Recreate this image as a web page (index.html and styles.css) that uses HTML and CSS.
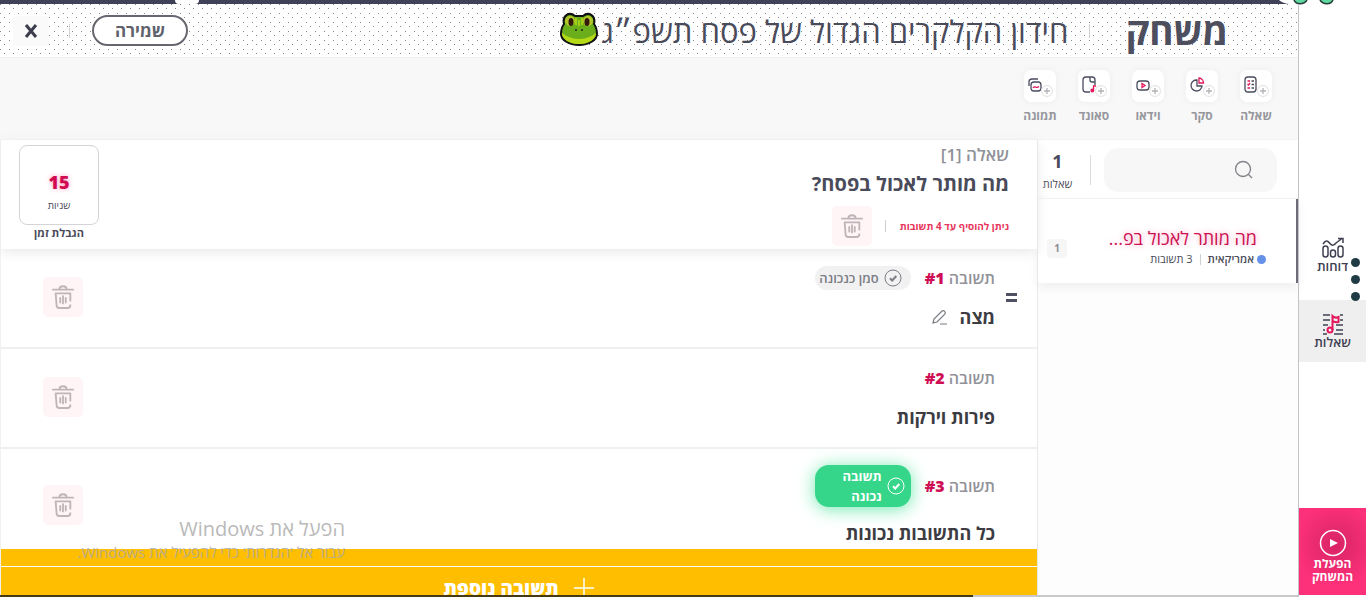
FILE: index.html
```html
<!DOCTYPE html>
<html lang="he" dir="rtl">
<head>
  <meta charset="UTF-8">
  <meta name="viewport" content="width=device-width, initial-scale=1.0">
  <title>משחק</title>
  <link rel="stylesheet" href="styles.css">
</head>
<body>
  <svg class="sprite" aria-hidden="true">
    <symbol id="trash" viewBox="0 0 24 28">
      <g fill="none" stroke="currentColor" stroke-width="2" stroke-linecap="round" stroke-linejoin="round">
        <path d="M1 6h22M8 6c0-5 8-5 8 0"/>
        <path d="M20 18v-8H4l1 13c0 2 1 3 3 3h9c2 0 3-1 3-3"/>
        <path d="M9 15v5M12 13v8M15 15v5"/>
      </g>
    </symbol>
    <symbol id="check" viewBox="0 0 18 18">
      <circle cx="9" cy="9" r="8" fill="none" stroke="currentColor"/>
      <path d="M6 9.300l2.200 2.200L12.300 7" fill="none" stroke="currentColor" stroke-width="2"/>
    </symbol>
  </svg>

  <nav class="sidebar">
    <a class="nav-item" href="#reports">
      <svg width="24" height="22" viewBox="0 0 24 22" fill="none" stroke="#3f4152" stroke-width="1.500">
        <rect x="2" y="9" width="5" height="11" rx="2.500"/>
        <rect x="9.500" y="13" width="5" height="7" rx="2.500"/>
        <rect x="17" y="9" width="5" height="11" rx="2.500"/>
        <path d="M2 7c3-5 5-3 7-.5s4 2 6-.5l6-4.500M17 1.500h5V6"/>
      </svg>
      <span>דוחות</span>
    </a>
    <a class="nav-item active" href="#questions">
      <svg width="22" height="22" viewBox="0 0 22 22" fill="none">
        <path d="M1 2h7M18 2h3M1 7h7M18 7h3M1 12h5M14 12h7M1 17h2M14 17h7M1 21h4M12 21h9" stroke="#3f4152" stroke-width="1.500"/>
        <circle cx="8" cy="17" r="2.500" stroke="#e4175c" stroke-width="2"/>
        <path d="M10.500 17V3c2 2 4 2 6 1v5c-2 1-4 0-6-1" stroke="#e4175c" stroke-width="2"/>
      </svg>
      <span>שאלות</span>
    </a>
    <button class="start" type="button">
      <svg width="28" height="28" viewBox="0 0 28 28">
        <circle cx="14" cy="14" r="12.500" fill="none" stroke="#fff" stroke-width="1.500"/>
        <path d="M11 10l8 4-8 4z" fill="#fff"/>
      </svg>
      <span>הפעלת המשחק</span>
    </button>
    <div class="dots"><i></i><i></i><i></i></div>
    <svg class="legs" width="60" height="5" viewBox="0 0 60 5">
      <path d="M0 0c4 4 10 4 20 5V0z" fill="#fff"/>
      <path d="M15 0c2 5 10 5 13 0M41 0c3 5 11 5 13 0" fill="#5fd8a0" stroke="#263b38" stroke-width="1.500"/>
    </svg>
  </nav>

  <main class="main">
    <header class="topbar">
      <h1>משחק</h1>
      <span class="divider"></span>
      <h2>חידון הקלקרים הגדול של פסח תשפ״ג</h2>
      <svg class="frog" width="38" height="34" viewBox="0 0 38 34">
        <path d="M4 12C2 4 9-1 15 4h8c6-5 13 0 11 8 3 4 3 8 3 10 0 6-8 11-18 11S1 28 1 22c0-2 0-6 3-10z" fill="#6bae1b" stroke="#111" stroke-width="2"/>
        <path d="M2 21c10 8 24 8 34 0 0 6-7 11-17 11S2 27 2 21z" fill="#b5d916"/>
        <circle cx="10" cy="9" r="5" fill="#b3c72a"/>
        <circle cx="28" cy="9" r="5" fill="#b3c72a"/>
        <ellipse cx="11" cy="10" rx="2.500" ry="4" fill="#33190c"/>
        <ellipse cx="27" cy="10" rx="2.500" ry="4" fill="#33190c"/>
        <path d="M16 6v7M19 8v6M22 6v7" stroke="#b5d916" stroke-width="1.500"/>
        <circle cx="16" cy="18" r="1" fill="#222"/>
        <circle cx="22" cy="18" r="1" fill="#222"/>
      </svg>
      <button class="save" type="button">שמירה</button>
      <span class="divider short"></span>
      <button class="close" type="button" aria-label="סגירה">
        <svg width="14" height="14" viewBox="0 0 14 14"><path d="M2 1l10 12M12 1L2 13" stroke="#3c3d4c" stroke-width="3"/></svg>
      </button>
    </header>

    <div class="toolbar">
      <button class="tool" type="button">
        <span class="tile">
          <svg width="28" height="24" viewBox="0 0 28 24" fill="none" stroke="#4a4c5e" stroke-width="1.300">
            <rect x="3" y="3" width="11" height="15" rx="3"/>
            <path d="M9.500 7H12M9.500 10.500H12M9.500 14H12"/>
            <path d="M5.500 7H8M5.500 10l1 1 1.500-2M5.500 14H8" stroke="#e4175c"/>
            <g class="plus"><circle cx="21" cy="17" r="5.500"/><path d="M21 14v6M18 17h6"/></g>
          </svg>
        </span>
        שאלה
      </button>
      <button class="tool" type="button">
        <span class="tile">
          <svg width="28" height="24" viewBox="0 0 28 24" fill="none" stroke="#4a4c5e" stroke-width="1.300">
            <path d="M9 6a5.500 5.500 0 1 0 5 6H9z"/>
            <path d="M11 9V4a5 5 0 0 1 4.500 5z" stroke="#e4175c"/>
            <g class="plus"><circle cx="21" cy="17" r="5.500"/><path d="M21 14v6M18 17h6"/></g>
          </svg>
        </span>
        סקר
      </button>
      <button class="tool" type="button">
        <span class="tile">
          <svg width="28" height="24" viewBox="0 0 28 24" fill="none" stroke="#4a4c5e" stroke-width="1.300">
            <rect x="3" y="7" width="12" height="9" rx="3"/>
            <path d="M8 9.500v4l3-2z" stroke="#e4175c"/>
            <g class="plus"><circle cx="21" cy="17" r="5.500"/><path d="M21 14v6M18 17h6"/></g>
          </svg>
        </span>
        וידאו
      </button>
      <button class="tool" type="button">
        <span class="tile">
          <svg width="28" height="24" viewBox="0 0 28 24" fill="none" stroke="#4a4c5e" stroke-width="1.300">
            <path d="M10 18H6a3 3 0 0 1-3-3V6a3 3 0 0 1 3-3h6a3 3 0 0 1 3 3v5M10 3v3c0 1 1 2 2 2h3"/>
            <g class="plus"><circle cx="21" cy="17" r="5.500"/><path d="M21 14v6M18 17h6"/></g>
            <path d="M13.500 16.500V12H16" stroke="#e4175c"/>
            <circle cx="12.300" cy="16.500" r="1.300" fill="#e4175c" stroke="#e4175c"/>
          </svg>
        </span>
        סאונד
      </button>
      <button class="tool" type="button">
        <span class="tile">
          <svg width="28" height="24" viewBox="0 0 28 24" fill="none" stroke="#4a4c5e" stroke-width="1.300">
            <path d="M3 12V8a3 3 0 0 1 3-3h6"/>
            <rect x="5" y="8" width="10" height="9" rx="3"/>
            <path d="M7 14c2-3 3 1 6-1.500" stroke="#e4175c"/>
            <g class="plus"><circle cx="21" cy="17" r="5.500"/><path d="M21 14v6M18 17h6"/></g>
          </svg>
        </span>
        תמונה
      </button>
    </div>

    <div class="content">
      <aside class="list">
        <div class="list-head">
          <label class="search">
            <svg width="20" height="20" viewBox="0 0 20 20" fill="none" stroke="#808289" stroke-width="1.300"><circle cx="9" cy="9" r="7.500"/><path d="M14.500 14.500L18 18"/></svg>
            <input type="search" aria-label="חיפוש">
          </label>
          <div class="count"><b>1</b><span>שאלות</span></div>
        </div>
        <a class="question" href="#q1">
          <span class="question-text">
            <span class="question-title">מה מותר לאכול בפ...</span>
            <span class="meta"><i></i><b>אמריקאית</b><span class="bar"></span>3 תשובות</span>
          </span>
          <span class="number">1</span>
        </a>
      </aside>

      <section class="editor">
        <div class="editor-head">
          <div class="editor-title">
            <p>שאלה [1]</p>
            <h3>מה מותר לאכול בפסח?</h3>
            <div class="hint">
              <span>ניתן להוסיף עד 4 תשובות</span>
              <button class="trash" type="button" aria-label="מחיקה"><svg width="22" height="26"><use href="#trash"/></svg></button>
            </div>
          </div>
          <div class="timer">
            <div class="timer-box"><b>15</b><span>שניות</span></div>
            <span class="timer-label">הגבלת זמן</span>
          </div>
        </div>

        <div class="answers">
          <div class="answer">
            <span class="drag"></span>
            <div class="answer-body">
              <div class="answer-head">
                <span class="answer-label">תשובה <b>#1</b></span>
                <button class="mark" type="button"><svg width="18" height="18"><use href="#check"/></svg>סמן כנכונה</button>
              </div>
              <div class="answer-name">מצה
                <svg width="16" height="16" viewBox="0 0 16 16" fill="none" stroke="#777982" stroke-width="1.200"><path d="M1 14l1-4 8-8c2-1 4 1 3 3l-8 8zM8 15h7"/></svg>
              </div>
            </div>
            <button class="trash" type="button" aria-label="מחיקה"><svg width="22" height="26"><use href="#trash"/></svg></button>
          </div>
          <div class="answer">
            <span class="drag hidden"></span>
            <div class="answer-body">
              <div class="answer-head">
                <span class="answer-label">תשובה <b>#2</b></span>
              </div>
              <div class="answer-name">פירות וירקות</div>
            </div>
            <button class="trash" type="button" aria-label="מחיקה"><svg width="22" height="26"><use href="#trash"/></svg></button>
          </div>
          <div class="answer">
            <span class="drag hidden"></span>
            <div class="answer-body">
              <div class="answer-head">
                <span class="answer-label">תשובה <b>#3</b></span>
                <button class="mark correct" type="button"><svg width="18" height="18"><use href="#check"/></svg><span>תשובה נכונה</span></button>
              </div>
              <div class="answer-name">כל התשובות נכונות</div>
            </div>
            <button class="trash" type="button" aria-label="מחיקה"><svg width="22" height="26"><use href="#trash"/></svg></button>
          </div>
        </div>
        <div class="strip"></div>
        <button class="add" type="button">
          <svg width="22" height="22" viewBox="0 0 22 22"><path d="M11 1v20M1 11h20" stroke="#fff" stroke-width="1.500"/></svg>
          תשובה נוספת
        </button>
      </section>
    </div>
    <div class="bottom-line"></div>
    <div class="knob"></div>
  </main>

  <div class="watermark">
    <p class="big">הפעל את Windows</p>
    <p>עבור אל 'הגדרות' כדי להפעיל את Windows.</p>
  </div>
</body>
</html>
```
FILE: styles.css
```css
* {
  box-sizing: border-box;
}

body {
  margin: 0;
  height: 100vh;
  display: flex;
  overflow: hidden;
  position: relative;
  background: #fff;
  color: #4a4b5a;
  font-family: "Open Sans", "Liberation Sans", sans-serif;
  font-size: 14px;
}

h1, h2, h3, p {
  margin: 0;
}

button {
  font: inherit;
  color: inherit;
  border: 0;
  padding: 0;
  background: none;
  cursor: pointer;
}

a {
  color: inherit;
  text-decoration: none;
}

.sprite {
  position: absolute;
  width: 0;
  height: 0;
}

/* sidebar */
.sidebar {
  position: relative;
  z-index: 1;
  flex: none;
  width: 68px;
  display: flex;
  flex-direction: column;
  padding: 224px 0 2px;
  border-left: 1px solid #c4c4c6;
}

.nav-item {
  height: 62px;
  display: flex;
  flex-direction: column;
  align-items: center;
  justify-content: center;
  font-size: 13px;
  line-height: 14px;
  font-weight: 600;
  color: #3f4152;
}

.nav-item.active {
  margin-top: 14px;
  background: #efeff0;
}

.start {
  margin-top: auto;
  height: 87px;
  padding-top: 8px;
  display: flex;
  flex-direction: column;
  align-items: center;
  justify-content: center;
  background: radial-gradient(circle at 56% 42%, #d82465 0, #fd3179 42px);
  color: #fff;
  font-size: 12px;
  line-height: 13px;
  font-weight: 700;
}

.start span {
  width: 50px;
}

.dots {
  position: absolute;
  top: 258px;
  right: 6px;
  display: grid;
  gap: 8px;
}

.dots i {
  width: 9px;
  height: 9px;
  border-radius: 50%;
  background: #1f3c44;
}

.legs {
  position: absolute;
  top: 0;
  left: -20px;
}

/* header */
.main {
  position: relative;
  flex: 1;
  min-width: 0;
  display: flex;
  flex-direction: column;
}

.topbar {
  height: 57px;
  flex: none;
  display: flex;
  align-items: center;
  padding: 0 70px 0 13px;
  border-top: 4px solid #3f4159;
  background-color: #fff;
  background-image: conic-gradient(from 270deg at 1px 1px, #85858a 90deg, transparent 0), conic-gradient(from 270deg at 1px 1px, #85858a 90deg, transparent 0);
  background-size: 9px 9px;
  background-position: 0 0, 4px 4px;
}

.topbar h1 {
  font-size: 37px;
  line-height: 44px;
  font-weight: 700;
  color: #4d4e5e;
}

.divider {
  width: 1px;
  height: 14px;
  margin: 0 36px 0 20px;
  background: #d2d2d6;
}

.divider.short {
  margin: 0 22px 0 20px;
}

.topbar h2 {
  font-size: 31px;
  line-height: 44px;
  font-weight: 400;
}

.frog {
  margin: 0 3px 4px 0;
}

.save {
  width: 96px;
  height: 31px;
  margin-right: auto;
  border: 2px solid #66676f;
  border-radius: 16px;
  background: #fff;
  font-size: 17px;
  line-height: 24px;
  font-weight: 700;
  color: #60616b;
}

.close {
  width: 36px;
  height: 30px;
  display: grid;
  place-items: center;
  background: #fafafb;
}

.knob {
  position: absolute;
  top: 0;
  left: 175px;
  width: 24px;
  height: 4px;
  background: #fff;
  border-radius: 0 0 12px 12px;
}

/* toolbar */
.toolbar {
  height: 83px;
  flex: none;
  display: flex;
  align-items: flex-start;
  padding: 12px 15px 0;
  background: #f8f8f8;
  border-top: 1px solid #f1f1f2;
  border-bottom: 1px solid #f3f3f3;
}

.tool {
  width: 54px;
  display: flex;
  flex-direction: column;
  align-items: center;
  gap: 6px;
  font-size: 12px;
  line-height: 16px;
  font-weight: 700;
  color: #96979d;
}

.tile {
  width: 32px;
  height: 32px;
  display: grid;
  place-items: center;
  border-radius: 7px;
  background: #fff;
  box-shadow: 0 0 6px #ececec;
}

.plus circle {
  fill: #fff;
  stroke: #e8e8e9;
}

.plus path {
  stroke: #b4b4b8;
}

.content {
  flex: 1;
  min-height: 0;
  display: flex;
}

/* question list */
.list {
  width: 260px;
  flex: none;
  background: #fdfdfd;
}

.list-head {
  height: 59px;
  display: flex;
  align-items: center;
  padding: 2px 21px 0 0;
  background: #fff;
  border-bottom: 1px solid #f3f3f3;
}

.search {
  width: 173px;
  height: 44px;
  display: flex;
  align-items: center;
  padding: 0 23px 0 12px;
  border-radius: 14px;
  background: #f7f7f7;
}

.search input {
  flex: 1;
  min-width: 0;
  border: 0;
  outline: 0;
  background: none;
  font: inherit;
}

.count {
  flex: 1;
  margin-right: 13px;
  border-right: 1px solid #dcdce0;
  height: 30px;
  display: flex;
  flex-direction: column;
  align-items: center;
  justify-content: center;
  padding-top: 4px;
  padding-right: 13px;
  font-size: 11px;
  line-height: 22px;
}

.count b {
  font-size: 18px;
  line-height: 24px;
}

.question {
  height: 84px;
  display: flex;
  align-items: center;
  justify-content: space-between;
  padding: 14px 30px 0 9px;
  border-right: 2px solid #6b6c78;
  background: #fff;
  box-shadow: 0 4px 10px #eee;
}

.question-text {
  display: flex;
  flex-direction: column;
}

.question-title {
  padding-right: 9px;
  font-size: 18px;
  line-height: 22px;
  color: #cc1150;
  text-shadow: 0 0 6px #ff9fc0;
  white-space: nowrap;
}

.meta {
  display: flex;
  align-items: center;
  font-size: 11px;
  line-height: 20px;
}

.meta b {
  font-weight: 600;
}

.meta i {
  width: 9px;
  height: 9px;
  margin-left: 3px;
  border-radius: 50%;
  background: #6691e9;
}

.bar {
  width: 1px;
  height: 11px;
  margin: 0 7px;
  background: #cfcfd3;
}

.number {
  width: 20px;
  height: 19px;
  border-radius: 4px;
  background: #f6f6f6;
  color: #8c8d94;
  font-size: 10px;
  line-height: 19px;
  font-weight: 700;
  text-align: center;
}

/* editor */
.editor {
  flex: 1;
  min-width: 0;
  display: flex;
  flex-direction: column;
  border-left: 1px solid #f1f1f1;
  border-right: 1px solid #e8e8e8;
}

.editor-head {
  position: relative;
  height: 109px;
  flex: none;
  display: flex;
  justify-content: space-between;
  padding: 4px 28px 0 18px;
  background: #fff;
  box-shadow: 0 3px 12px #e8e8e8;
}

.editor-title p {
  font-size: 17px;
  line-height: 22px;
  font-weight: 600;
  color: #909198;
}

.editor-title h3 {
  font-size: 20px;
  line-height: 36px;
  font-weight: 700;
}

.hint {
  display: flex;
  align-items: center;
  height: 48px;
  font-size: 10px;
  font-weight: 700;
  color: #e8365c;
}

.hint .trash {
  margin-right: 28px;
}

.hint span {
  position: relative;
}

.hint span::after {
  content: "";
  position: absolute;
  left: -15px;
  top: 1px;
  width: 1px;
  height: 12px;
  background: #cfcfd3;
}

.trash {
  width: 40px;
  height: 40px;
  flex: none;
  display: grid;
  place-items: center;
  border-radius: 5px;
  background: #fff4f6;
  color: #bfb4b7;
}

.timer {
  width: 80px;
  display: flex;
  flex-direction: column;
  align-items: center;
  padding-top: 1px;
}

.timer-box {
  width: 80px;
  height: 80px;
  display: flex;
  flex-direction: column;
  align-items: center;
  padding-top: 24px;
  border: 1px solid #d4d4d7;
  border-radius: 8px;
}

.timer-box b {
  font-size: 18px;
  line-height: 24px;
  font-weight: 800;
  color: #d20a50;
  text-shadow: 0 0 5px #ff9fc0;
}

.timer-box span {
  font-size: 10px;
  line-height: 22px;
}

.timer-label {
  font-size: 11px;
  line-height: 16px;
  font-weight: 700;
}

.answers {
  flex: 1;
  min-height: 0;
  overflow: hidden;
}

.answer {
  display: flex;
  align-items: center;
  padding: 16px 20px 18px 42px;
  border-bottom: 2px solid #f0f0f1;
}

.drag {
  width: 11px;
  height: 9px;
  border-top: 3px solid #4f5062;
  border-bottom: 3px solid #4f5062;
}

.drag.hidden {
  visibility: hidden;
}

.answer-body {
  flex: 1;
  margin-right: 11px;
}

.answer-head {
  display: flex;
  align-items: center;
  gap: 14px;
  min-height: 26px;
}

.answer-label {
  font-size: 16px;
  line-height: 24px;
  font-weight: 600;
  color: #919299;
}

.answer-label b {
  color: #cf0f54;
}

.mark {
  width: 96px;
  min-height: 24px;
  display: flex;
  align-items: center;
  gap: 5px;
  padding-right: 9px;
  border-radius: 14px;
  background: #f1f1f2;
  color: #7c7d85;
  font-size: 13px;
  line-height: 20px;
  font-weight: 600;
  white-space: nowrap;
}

.mark svg {
  flex: none;
}

.mark.correct {
  min-height: 42px;
  padding-right: 6px;
  padding-left: 20px;
  background: #35d689;
  box-shadow: 0 2px 18px #70e9b0;
  color: #fff;
  font-weight: 700;
  text-align: right;
  white-space: normal;
}

.answer-name {
  display: flex;
  align-items: center;
  gap: 12px;
  margin-top: 14px;
  font-size: 18px;
  line-height: 24px;
  font-weight: 700;
  color: #3c3c42;
}

.strip {
  height: 17px;
  flex: none;
  background: #ffbf00;
}

.add {
  height: 29px;
  flex: none;
  display: flex;
  align-items: flex-start;
  justify-content: center;
  gap: 14px;
  padding-top: 10px;
  border-top: 1px solid #fff;
  background: #ffbf00;
  color: #fff;
  font-size: 19px;
  line-height: 22px;
  font-weight: 800;
}

.bottom-line {
  position: relative;
  height: 2px;
  flex: none;
  background: linear-gradient(to left, #c9c9c9 25%, #453a14 25%);
}

.watermark {
  position: absolute;
  left: 69px;
  top: 516px;
  width: 276px;
  color: #a9a9a9;
  font-size: 15px;
  line-height: 20px;
  white-space: nowrap;
  opacity: 0.8;
  pointer-events: none;
}

.watermark .big {
  font-size: 20px;
  line-height: 26px;
}
```
